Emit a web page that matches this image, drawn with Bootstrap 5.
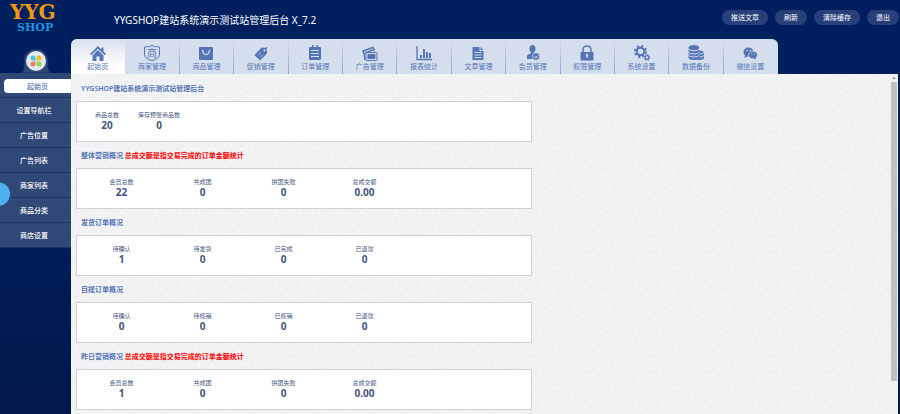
<!DOCTYPE html>
<html lang="zh-CN">
<head>
<meta charset="utf-8">
<meta name="viewport" content="width=device-width, initial-scale=1">
<title>YYGSHOP</title>
<link href="https://cdn.jsdelivr.net/npm/bootstrap@5.3.0/dist/css/bootstrap.min.css" rel="stylesheet">
<style>
body{font-family:"Noto Sans","Noto Sans CJK SC",sans-serif;font-size:7px;line-height:10px;color:#3f5580;background:linear-gradient(#001f5f 40%,#00184a);}
.topbar{height:39px}
.side-w{width:71px}
.brand-logo{font-family:"DejaVu Serif",serif;font-weight:700;padding:4px 0 0 10px}
.brand-top{font-size:20px;line-height:17px;color:#f39a0c}
.brand-sub{font-size:11px;line-height:13px;color:#1b93dc;padding-left:7px}
.site-title{font-size:10px;line-height:14px;font-weight:400;margin:0 0 0 43px;color:#fff}
.pill{height:15px;padding:0 9px;font-size:7px;line-height:16px;border:0;color:#fff;background:#27407a}
.pill:hover{color:#fff;background:#3a5490}
.top-actions{gap:7px;padding:10px 1px 0 0}
.hump{height:34px;padding-top:9px}
.side-menu{background:#304876}
.side-menu a{height:25px;padding:2px 3px 0 0;color:#fff;border-bottom:1px solid #1b3467;font-weight:500}
.side-menu .active-item{padding:6px 0 4px 4px}
.side-menu .active-item span{height:14px;line-height:15px;background:#fff;color:#5371ae;border-radius:4px 0 0 4px}
.handle{left:-14px;top:182px;width:24px;height:24px;background:#4bb2ef}
.tab-strip{max-width:707px;height:35px;background:#d5deed;border-radius:6px 6px 0 0}
.tab-strip a{flex:1 1 0;min-width:0;padding-top:6px;color:#5575b5;border-right:1px solid;border-image:linear-gradient(#d5deed,#8fa3c4) 1}
.tab-strip a:first-child{background:linear-gradient(#d9e1ee,#fff 80%);border-radius:6px 0 0 0;border-image:none;border-color:transparent}
.tab-strip a:last-child{border-image:none;border-color:transparent}
.tab-strip svg{width:18px;height:18px;margin-bottom:-1px}
.stage{margin-right:2px;background:#f2f4f5}
.texture{background-image:url("data:image/svg+xml,%3Csvg xmlns='http://www.w3.org/2000/svg' width='120' height='120'%3E%3Cfilter id='n'%3E%3CfeTurbulence type='fractalNoise' baseFrequency='.3' numOctaves='3' stitchTiles='stitch'/%3E%3CfeColorMatrix values='0 0 0 0 .5 0 0 0 0 .53 0 0 0 0 .58 0 .25 0 0 -.09'/%3E%3C/filter%3E%3Crect width='120' height='120' filter='url(%23n)'/%3E%3C/svg%3E");padding:1px 0 4px 5px}
.block-title{height:26px;padding:0 0 0 5px;margin:0;font-size:7px;line-height:27px;font-weight:600;color:#5675b4}
.block-title strong{color:#f00;font-weight:700}
.stats{width:56%;min-height:41px;background:#fff;border:1px solid #cfd1d3;padding:8px 4px 0}
.stats dl{width:81px;margin:0;text-align:center}
.stats .auto-cell{width:auto;padding-right:19px}
.stats .lead-cell{padding-left:14px}
.stats dt{font-size:6px;line-height:10px;font-weight:400}
.stats dd{font-size:10px;line-height:11px;font-weight:700;margin:0}
.scroll-track{width:8px;background:#f1f1f1}
.scroll-track i{height:8px}
.scroll-track i::before{content:"";border:2px solid transparent;border-bottom-color:#8a8a8a;border-top:0}
.scroll-thumb{width:6px;height:88%;background:#c1c1c1}
</style>
<script src="https://cdn.jsdelivr.net/npm/bootstrap@5.3.0/dist/js/bootstrap.bundle.min.js"></script>
</head>
<body class="d-flex flex-column min-vh-100">
<header class="topbar d-flex">
  <div class="side-w brand-logo flex-shrink-0"><div class="brand-top">YYG</div><div class="brand-sub">SHOP</div></div>
  <div class="d-flex align-items-center flex-grow-1"><h1 class="site-title text-nowrap">YYGSHOP建站系统演示测试站管理后台 X_7.2</h1></div>
  <div class="top-actions d-flex align-items-start flex-shrink-0">
    <button type="button" class="btn pill rounded-pill">推送文章</button>
    <button type="button" class="btn pill rounded-pill">刷新</button>
    <button type="button" class="btn pill rounded-pill">清除缓存</button>
    <button type="button" class="btn pill rounded-pill">退出</button>
  </div>
</header>
<div class="d-flex flex-grow-1">
  <aside class="side-w flex-shrink-0">
    <div class="hump d-flex justify-content-center">
      <svg width="32" height="25" viewBox="0 0 32 25" aria-hidden="true">
        <path d="M0 25Q4 24 4 19V13A12 12 0 0 1 28 13V19Q28 24 32 25Z" fill="#304876" stroke="#152d61"/>
        <circle cx="16" cy="13" r="10" fill="#e2e8f2"/>
        <path d="M15.500 12.500H12.500A2.500 2.500 0 1 1 15.500 10Z" fill="#4fc4dd"/>
        <path d="M16.500 12.500V10A2.500 2.500 0 1 1 19 12.500Z" fill="#f6b90d"/>
        <path d="M15.500 13.500V16A2.500 2.500 0 1 1 13 13.500Z" fill="#f47a68"/>
        <path d="M16.500 13.500H19A2.500 2.500 0 1 1 16.500 16Z" fill="#87d850"/>
      </svg>
    </div>
    <nav class="side-menu d-flex flex-column" aria-label="侧栏">
      <a href="#" class="active-item text-decoration-none"><span class="d-block text-center">起始页</span></a>
      <a href="#" class="d-flex align-items-center justify-content-center text-decoration-none">设置导航栏</a>
      <a href="#" class="d-flex align-items-center justify-content-center text-decoration-none">广告位置</a>
      <a href="#" class="d-flex align-items-center justify-content-center text-decoration-none">广告列表</a>
      <a href="#" class="d-flex align-items-center justify-content-center text-decoration-none">商家列表</a>
      <a href="#" class="d-flex align-items-center justify-content-center text-decoration-none">商品分类</a>
      <a href="#" class="d-flex align-items-center justify-content-center text-decoration-none">商店设置</a>
    </nav>
    <button type="button" class="handle position-absolute rounded-circle border-0 p-0" aria-label="展开"></button>
  </aside>
  <div class="d-flex flex-column flex-grow-1">
    <nav class="tab-strip d-flex overflow-hidden" aria-label="主菜单">
      <a href="#" class="d-flex flex-column align-items-center text-decoration-none"><svg viewBox="0 0 18 18" fill="currentColor"><path d="M9 1 1 9l1.300 1.300L9 3.700l6.700 6.600L17 9l-2.500-2.500V2.500h-2V4.500Z"/><path d="M9 5 3.500 10.500V16H7.500V11.500H10.500V16H14.500V10.500Z"/></svg><span>起始页</span></a>
      <a href="#" class="d-flex flex-column align-items-center text-decoration-none"><svg viewBox="0 0 18 18" fill="none" stroke="currentColor"><path d="M9 .5Q6 2 1.500 2V9Q1.500 14 9 15.500Q16.500 14 16.500 9V2Q12 2 9 .5Z"/><text x="9" y="11.500" font-size="10" text-anchor="middle" fill="currentColor" stroke="none">商</text></svg><span>商家管理</span></a>
      <a href="#" class="d-flex flex-column align-items-center text-decoration-none"><svg viewBox="0 0 18 18" fill="currentColor"><rect x="2" y="2" width="14" height="13" rx="1"/><path d="M5.500 5Q6 9.500 9 9.500T12.500 5" fill="none" stroke="#d5deed" stroke-width="1.300"/></svg><span>商品管理</span></a>
      <a href="#" class="d-flex flex-column align-items-center text-decoration-none"><svg viewBox="0 0 18 18" fill="currentColor"><path d="M9.500 2.500 14.500 3 15 8.500 8 15.500 2.500 10Z"/><path d="M6.500 10 9 7.500M8.500 12 11 9.500" stroke="#d5deed" stroke-width=".8"/><circle cx="12.500" cy="5.300" r="1.100" fill="#d5deed"/><path d="m13 5 2-3" stroke="currentColor"/></svg><span>促销管理</span></a>
      <a href="#" class="d-flex flex-column align-items-center text-decoration-none"><svg viewBox="0 0 18 18" fill="currentColor"><path d="M4 2H6V0H7.500V2H10.500V0H12V2H14Q15 2 15 3V14Q15 15 14 15H4Q3 15 3 14V3Q3 2 4 2Z"/><path d="M5 5.500H13M5 8.500H13M5 11.500H13" stroke="#d5deed"/></svg><span>订单管理</span></a>
      <a href="#" class="d-flex flex-column align-items-center text-decoration-none"><svg viewBox="0 0 18 18" fill="none" stroke="currentColor"><path d="M3 9 2 6 12 2.500 13.500 6" stroke-width="1.500"/><path d="m4 8 8-3M3 8l1 7" stroke-width="1.500"/><rect x="5" y="7.500" width="11" height="8" rx=".5"/><path d="M7 9.500H14V13.500H7Z" fill="currentColor"/></svg><span>广告管理</span></a>
      <a href="#" class="d-flex flex-column align-items-center text-decoration-none"><svg viewBox="0 0 18 18" fill="none" stroke="currentColor"><path d="M2 1V14.500H17" stroke-width="1.300"/><path d="M6 13V10M9 13V4M12 13V7M15 13V8" stroke-width="2"/></svg><span>报表统计</span></a>
      <a href="#" class="d-flex flex-column align-items-center text-decoration-none"><svg viewBox="0 0 18 18" fill="currentColor"><path d="M3.500 2H10.500V6H14.500V15H3.500ZM11.500 2 14.500 5H11.500Z"/><path d="M5.500 7.500H12.500M5.500 10H12.500M5.500 12.500H12.500" stroke="#d5deed"/></svg><span>文章管理</span></a>
      <a href="#" class="d-flex flex-column align-items-center text-decoration-none"><svg viewBox="0 0 18 18" fill="currentColor"><ellipse cx="8.500" cy="3.800" rx="3" ry="3.700"/><path d="M7 7H10V10L9 14H3V11Q3 9.500 7 8.500Z"/><circle cx="12" cy="11.500" r="3.700" stroke="#d5deed" stroke-width=".7"/><path d="m10 11 2 2 2-2.500" fill="none" stroke="#d5deed"/></svg><span>会员管理</span></a>
      <a href="#" class="d-flex flex-column align-items-center text-decoration-none"><svg viewBox="0 0 18 18" fill="currentColor"><rect x="2.500" y="7" width="13" height="8.500" rx="1"/><path d="M5 7V5Q5 1 9 1T13 5V7" fill="none" stroke="currentColor" stroke-width="1.500"/><path d="M8 9H10V10.500L9.500 13H8.500L8 10.500Z" fill="#d5deed"/></svg><span>权限管理</span></a>
      <a href="#" class="d-flex flex-column align-items-center text-decoration-none"><svg viewBox="0 0 18 18" fill="none" stroke="currentColor"><circle cx="7.500" cy="6.500" r="3.800" stroke-width="2"/><circle cx="7.500" cy="6.500" r="5.500" stroke-width="2" stroke-dasharray="2.160 2.160"/><circle cx="14" cy="12.500" r="1.900" stroke-width="1.300"/><circle cx="14" cy="12.500" r="2.900" stroke-dasharray="1.140 1.140"/></svg><span>系统设置</span></a>
      <a href="#" class="d-flex flex-column align-items-center text-decoration-none"><svg viewBox="0 0 18 18" fill="currentColor"><path d="M9 7.500Q10 5.500 13 5.500T17 7.500V13Q16 15 12 15L9 14Z"/><path d="M1.500 2.500V12.500Q2 15 7 15T12 12.500V2.500Z"/><ellipse cx="7" cy="2.500" rx="5.300" ry="2.500"/><path d="M1.500 3.500Q2 5.700 7 5.700T12 3.500M1.500 7Q2 9 7 9T12 7M1.500 10Q2 12 7 12T12 10M12.500 9Q16 9 17 7.500M12.500 12Q16 12 17 10.500" fill="none" stroke="#d5deed"/></svg><span>数据备份</span></a>
      <a href="#" class="d-flex flex-column align-items-center text-decoration-none"><svg viewBox="0 0 18 18" fill="currentColor"><ellipse cx="7.500" cy="7" rx="5" ry="4.500"/><path d="m4 10-.5 3L7 11Z"/><ellipse cx="12" cy="10" rx="4.500" ry="3.800" stroke="#d5deed" stroke-width=".7"/><path d="m12 13 3 1.500-.5-3Z"/><g fill="#d5deed"><circle cx="6" cy="5.500" r=".7"/><circle cx="9.500" cy="5.500" r=".7"/><circle cx="10.700" cy="9" r=".6"/><circle cx="13.500" cy="9" r=".6"/></g></svg><span>微信设置</span></a>
    </nav>
    <div class="stage d-flex flex-grow-1">
      <main class="texture flex-grow-1">
        <h2 class="block-title">YYGSHOP建站系统演示测试站管理后台</h2>
        <section class="stats d-flex"><dl class="auto-cell lead-cell"><dt>商品总数</dt><dd>20</dd></dl><dl class="auto-cell"><dt>库存预警商品数</dt><dd>0</dd></dl></section>
        <h2 class="block-title">整体营销概况 <strong>总成交额是指交易完成的订单金额统计</strong></h2>
        <section class="stats d-flex"><dl><dt>会员总数</dt><dd>22</dd></dl><dl><dt>共成团</dt><dd>0</dd></dl><dl><dt>拼团失败</dt><dd>0</dd></dl><dl><dt>总成交额</dt><dd>0.00</dd></dl></section>
        <h2 class="block-title">发货订单概况</h2>
        <section class="stats d-flex"><dl><dt>待确认</dt><dd>1</dd></dl><dl><dt>待发货</dt><dd>0</dd></dl><dl><dt>已完成</dt><dd>0</dd></dl><dl><dt>已退款</dt><dd>0</dd></dl></section>
        <h2 class="block-title">自提订单概况</h2>
        <section class="stats d-flex"><dl><dt>待确认</dt><dd>0</dd></dl><dl><dt>待核销</dt><dd>0</dd></dl><dl><dt>已核销</dt><dd>0</dd></dl><dl><dt>已退款</dt><dd>0</dd></dl></section>
        <h2 class="block-title">昨日营销概况 <strong>总成交额是指交易完成的订单金额统计</strong></h2>
        <section class="stats d-flex"><dl><dt>会员总数</dt><dd>1</dd></dl><dl><dt>共成团</dt><dd>0</dd></dl><dl><dt>拼团失败</dt><dd>0</dd></dl><dl><dt>总成交额</dt><dd>0.00</dd></dl></section>
      </main>
      <div class="scroll-track d-flex flex-column align-items-center" aria-hidden="true"><i class="d-flex align-items-center"></i><div class="scroll-thumb"></div></div>
    </div>
  </div>
</div>
</body>
</html>
